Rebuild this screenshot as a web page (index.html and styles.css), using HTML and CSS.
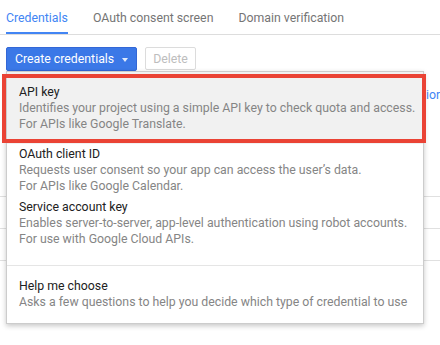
FILE: index.html
```html
<!DOCTYPE html>
<html lang="en">
<head>
<meta charset="utf-8">
<title>Credentials</title>
<link rel="stylesheet" href="styles.css">
</head>
<body>
<div class="page">
  <nav class="tabs">
    <a class="tab tab-active">Credentials</a>
    <a class="tab">OAuth consent screen</a>
    <a class="tab">Domain verification</a>
  </nav>

  <div class="toolbar">
    <div class="dropdown">
      <button class="btn-primary">Create credentials <span class="caret"></span></button>
      <div class="menu">
        <div class="menu-item menu-item-hover">
          <div class="item-title">API key</div>
          <div class="item-desc">Identifies your project using a simple API key to check quota and access.<br>For APIs like Google Translate.</div>
          <div class="highlight-box"></div>
        </div>
        <div class="menu-item item-oauth">
          <div class="item-title">OAuth client ID</div>
          <div class="item-desc">Requests user consent so your app can access the user’s data.<br>For APIs like Google Calendar.</div>
        </div>
        <div class="menu-item item-service">
          <div class="item-title">Service account key</div>
          <div class="item-desc">Enables server-to-server, app-level authentication using robot accounts.<br>For use with Google Cloud APIs.</div>
        </div>
        <div class="menu-item item-help">
          <div class="item-title">Help me choose</div>
          <div class="item-desc">Asks a few questions to help you decide which type of credential to use</div>
        </div>
      </div>
    </div>
    <button class="btn" disabled>Delete</button>
  </div>

  <div class="backdrop">
    <p class="backdrop-link">ior</p>
    <div class="backdrop-rows">
      <div class="backdrop-row"></div>
      <div class="backdrop-row"></div>
      <div class="backdrop-row"></div>
    </div>
  </div>
</div>
</body>
</html>
```

FILE: styles.css
```css
* { box-sizing: border-box; }

html, body {
  margin: 0;
  padding: 0;
  background: #ffffff;
}

body {
  width: 440px;
  height: 345px;
  overflow: hidden;
  font-family: Roboto, "Liberation Sans", Arial, sans-serif;
  font-size: 12.3px;
  line-height: 16px;
  color: #212121;
}

.page {
  display: flex;
  flex-direction: column;
}

/* Tabs */
.tabs {
  display: flex;
  gap: 25px;
  padding: 0 6px;
  border-bottom: 1px solid #dddddd;
}

.tab {
  display: block;
  height: 34px;
  padding-top: 10px;
  font-size: 12.3px;
  line-height: 16px;
  color: #757575;
  white-space: nowrap;
}

.tab-active {
  color: #4285f4;
  box-shadow: inset 0 -2px 0 #4285f4;
}

/* Toolbar */
.toolbar {
  display: flex;
  align-items: flex-start;
  gap: 8px;
  margin-top: 12px;
  padding-left: 6px;
}

.dropdown {
  position: relative;
}

.btn-primary {
  display: flex;
  align-items: center;
  gap: 8px;
  height: 24px;
  padding: 0 8px;
  border: 1px solid #3367d6;
  border-radius: 2px;
  background: #3b78e7;
  color: #ffffff;
  font-family: inherit;
  font-size: 12.3px;
  line-height: 16px;
  white-space: nowrap;
}

.caret {
  width: 0;
  height: 0;
  border-left: 3.5px solid transparent;
  border-right: 3.5px solid transparent;
  border-top: 4px solid rgba(255, 255, 255, 0.85);
  margin-top: 1px;
}

.btn {
  height: 23px;
  padding: 0 7px;
  border: 1px solid #dcdcdc;
  border-radius: 2px;
  background: #ffffff;
  color: #bdbdbd;
  font-family: inherit;
  font-size: 12.3px;
  line-height: 16px;
}

/* Dropdown menu */
.menu {
  position: absolute;
  top: 100%;
  left: 0;
  z-index: 10;
  width: 418px;
  background: #ffffff;
  border: 1px solid rgba(0, 0, 0, 0.2);
  box-shadow: 0 2px 5px rgba(0, 0, 0, 0.22);
}

.menu-item {
  padding: 12px 12px 12px;
}

.menu-item-hover {
  position: relative;
  background: #f1f1f1;
}

.item-oauth {
  padding: 2px 12px 3px;
}

.item-service {
  padding: 2px 12px 18px;
}

.item-help {
  padding: 12px 12px 13px;
  border-top: 1px solid #e5e5e5;
}

.item-title {
  color: #212121;
  white-space: nowrap;
}

.item-desc {
  color: #858585;
  white-space: nowrap;
}

.highlight-box {
  position: absolute;
  left: -5px;
  top: 2px;
  right: -3px;
  bottom: 1px;
  border: 4px solid #ea4335;
  pointer-events: none;
}

/* Page content behind the menu */
.backdrop {
  display: flex;
  flex-direction: column;
}

.backdrop-link {
  margin: 16px 0 0;
  padding-left: 426px;
  color: #4285f4;
  white-space: nowrap;
}

.backdrop-rows {
  margin-top: 93px;
  display: flex;
  flex-direction: column;
}

.backdrop-row {
  height: 32px;
  border-top: 1px solid #e0e0e0;
}
```
